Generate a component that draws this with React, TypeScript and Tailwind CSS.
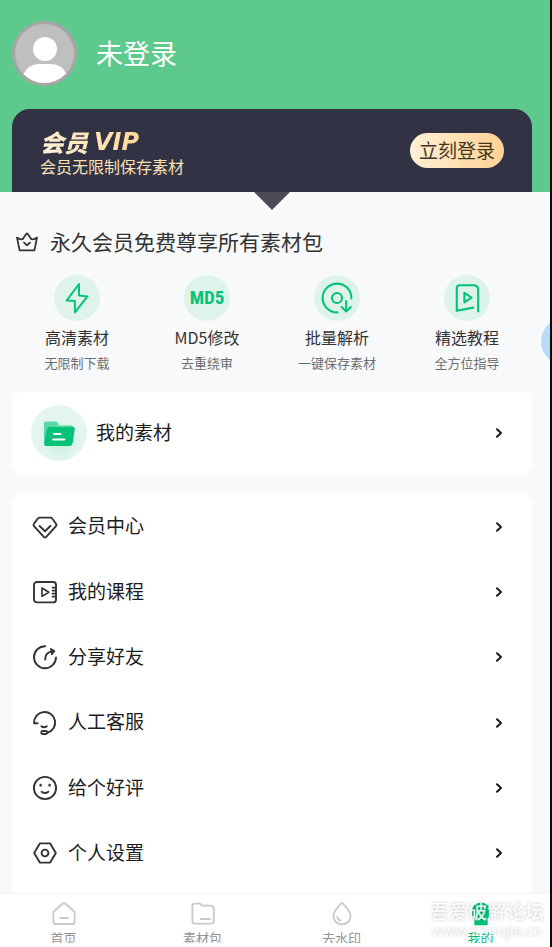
import type { ReactNode } from 'react';

const stroke = {
  fill: 'none',
  stroke: 'currentColor',
  strokeLinecap: 'round' as const,
  strokeLinejoin: 'round' as const,
};

function CrownIcon() {
  return (
    <svg aria-hidden="true" className="h-6 w-6" viewBox="0 0 24 24" {...stroke} strokeWidth="1.8">
      <path d="M4.6 20.4 L2 7.6 Q5 9.8 7.6 9.2 L11.2 4 Q12 3 12.8 4 L16.4 9.2 Q19 9.8 22 7.6 L19.4 20.4 Z" />
      <path d="M9 12.6 L12 15.2 L15 12.6" />
    </svg>
  );
}

function BoltIcon() {
  return (
    <svg aria-hidden="true" className="h-[46px] w-[46px]" viewBox="0 0 46 46" {...stroke} strokeWidth="2">
      <path d="M25 9 L12.6 25.6 L20.8 26 L21 37.4 L33.4 21.4 L25 20.6 Z" />
    </svg>
  );
}

function DiscIcon() {
  return (
    <svg aria-hidden="true" className="h-[46px] w-[46px]" viewBox="0 0 46 46" {...stroke} strokeWidth="2.1">
      <path d="M37.4 23.5 A14.4 14.4 0 1 0 23.6 37.4" />
      <circle cx="23" cy="23" r="5" />
      <path d="M32.2 26 V36.2 M27.6 32 L32.2 36.4 L36.8 32" />
    </svg>
  );
}

function TutorialIcon() {
  return (
    <svg aria-hidden="true" className="h-[46px] w-[46px]" viewBox="0 0 46 46" {...stroke} strokeWidth="2.1">
      <path d="M29.2 32.6 L12.8 35.8 V13.2 Q12.8 10.2 15.8 10.2 H29.4 Q34.2 10.2 34.2 15 V36.4" />
      <path d="M20.4 17.8 V27.4 L27.6 22.6 Z" />
    </svg>
  );
}

function FolderBadge() {
  return (
    <svg aria-hidden="true" className="h-14 w-14 shrink-0" viewBox="0 0 56 56">
      <defs>
        <radialGradient id="badge" cx="50%" cy="62%" r="50%">
          <stop offset="0" stopColor="#bdebd8" />
          <stop offset="0.6" stopColor="#dff4ec" />
          <stop offset="1" stopColor="#e5f6f0" />
        </radialGradient>
      </defs>
      <circle cx="28" cy="28" r="28" fill="url(#badge)" />
      <path d="M13 18 Q13 16.4 14.6 16.4 H25 Q26.6 16.4 27 18 L27.6 20.4 H40.4 Q42.4 20.4 42.4 22.4 V38 H13 Z" fill="#5bd6a5" />
      <path d="M18.6 22 H41.6 Q44.2 22 43.8 24.6 L41.4 38.4 Q41 41 38.4 41 H15.6 Q12.9 41 13.2 38.4 L15.8 24.4 Q16.3 22 18.6 22 Z" fill="#05c279" />
      <path d="M23 29 H29.4 M22 34.6 H33.4" stroke="#fff" strokeWidth="2" strokeLinecap="round" />
    </svg>
  );
}

function MenuIcon({ children }: { children: ReactNode }) {
  return (
    <svg aria-hidden="true" className="h-7 w-7 shrink-0 text-[#333]" viewBox="0 0 28 28" {...stroke} strokeWidth="1.9">
      {children}
    </svg>
  );
}

function Chevron() {
  return (
    <svg aria-hidden="true" className="h-3 w-2 shrink-0" viewBox="0 0 8 12" {...stroke} strokeWidth="2">
      <path d="M2 2.2 L6 6 L2 9.8" />
    </svg>
  );
}

const features = [
  { title: '高清素材', note: '无限制下载', icon: <BoltIcon /> },
  {
    title: 'MD5修改',
    note: '去重绕审',
    icon: <span className="font-['Liberation_Sans_Narrow','Roboto_Condensed',Roboto,sans-serif] text-[19px] font-bold">MD5</span>,
  },
  { title: '批量解析', note: '一键保存素材', icon: <DiscIcon /> },
  { title: '精选教程', note: '全方位指导', icon: <TutorialIcon /> },
];

const menu = [
  {
    label: '会员中心',
    icon: (
      <>
        <path d="M8.6 4.6 H19.6 Q20.4 4.6 21 5.3 L25.2 11 Q25.9 12.1 25 13.1 L15.2 23.9 Q14 25.1 12.8 23.9 L3 13.1 Q2.1 12.1 2.8 11 L7 5.3 Q7.7 4.6 8.6 4.6 Z" />
        <path d="M8.6 13 L14 18.2 L19.4 13" />
      </>
    ),
  },
  {
    label: '我的课程',
    icon: (
      <>
        <rect x="3" y="4" width="22" height="20.4" rx="3" />
        <path d="M11 10 V18.4 L17.8 14.2 Z M21.4 9.6 H24.6 M21.4 12.6 H24.6 M21.4 15.6 H24.6 M21.4 18.6 H24.6" strokeWidth="1.6" />
      </>
    ),
  },
  {
    label: '分享好友',
    icon: (
      <>
        <path d="M14.2 3.2 A11 11 0 1 0 25 14.4" />
        <path d="M14.2 16.6 C14.2 12 16.6 9.2 20.4 8.6" />
        <path d="M19.8 5.4 L24 8 L21 11.8 Z" fill="currentColor" strokeWidth="1" />
      </>
    ),
  },
  {
    label: '人工客服',
    icon: (
      <>
        <path d="M6.6 14.2 H3 A10.6 10.6 0 1 1 16.2 23.9" />
        <path d="M10.4 17.2 Q13 19.2 15.8 17.2" />
        <rect x="10.2" y="22" width="6" height="3" rx="1.5" />
      </>
    ),
  },
  {
    label: '给个好评',
    icon: (
      <>
        <circle cx="14" cy="14" r="11.1" />
        <path d="M10.6 17.8 Q14 20.4 17.4 17.8" />
        <path d="M9.6 11 V11.4 M18.6 11 V11.4" strokeWidth="2.4" />
      </>
    ),
  },
  {
    label: '个人设置',
    icon: (
      <>
        <path d="M8.8 4.4 H19.2 L24.8 14 L19.2 23.6 H8.8 L3.2 14 Z" />
        <circle cx="14" cy="14" r="3.4" />
      </>
    ),
  },
];

const tabs = [
  {
    label: '首页',
    active: false,
    icon: <path d="M3 10.2 L11.2 3 Q13 1.6 14.8 3 L23 10.2 Q23.6 10.8 23.6 11.8 V21 Q23.6 23 21.6 23 H4.4 Q2.4 23 2.4 21 V11.8 Q2.4 10.8 3 10.2 Z M9.2 17 H17" />,
  },
  {
    label: '素材包',
    active: false,
    icon: <path d="M4.6 2.6 H9.4 Q10.4 2.6 11 3.4 Q11.8 4.6 13 4.6 H20.4 Q23.8 4.6 23.8 8 V20 Q23.8 22.6 21.2 22.6 H4.8 Q2.4 22.6 2.4 20.2 V4.8 Q2.4 2.6 4.6 2.6 Z M10.6 18 H20" />,
  },
  {
    label: '去水印',
    active: false,
    icon: <path d="M13 1.6 C9.6 5.2 4.4 10.4 4.4 15.2 A8.6 8.2 0 0 0 21.6 15.2 C21.6 10.4 16.4 5.2 13 1.6 Z M8.2 16 Q8.8 18.6 11.2 19.4" />,
  },
  {
    label: '我的',
    active: true,
    icon: (
      <>
        <path d="M13 1.4 A9.6 9.6 0 0 1 22.6 11 Q22.6 14.4 20.4 17.4 H5.6 Q3.4 14.4 3.4 11 A9.6 9.6 0 0 1 13 1.4 Z" fill="currentColor" stroke="none" />
        <path d="M7 18.4 H19 V23.6 H7 Z" fill="currentColor" strokeWidth="1.4" />
      </>
    ),
  },
];

export default function App() {
  return (
    <div className="relative flex min-h-screen flex-col overflow-hidden border-r-2 border-[#060b16] bg-[#f8f9fb] font-['Noto_Sans_CJK_SC',sans-serif] text-[#333]">
      <header className="relative bg-[#5ec98d] pr-[18px] pl-3 pt-[21px]">
        <div className="flex items-center gap-[19px]">
          <svg role="img" aria-label="头像" className="h-[65px] w-[65px]" viewBox="0 0 65 65">
            <defs>
              <clipPath id="face"><circle cx="32.5" cy="32.5" r="29.5" /></clipPath>
            </defs>
            <circle cx="32.5" cy="32.5" r="32.5" fill="#a6a6a6" />
            <circle cx="32.5" cy="32.5" r="29.5" fill="#bfbfbf" />
            <g clipPath="url(#face)" fill="#fff">
              <circle cx="33" cy="28" r="12" />
              <path d="M11 54 Q16 43 27 43 H39 Q50 43 55 54 V65 H11 Z" />
            </g>
          </svg>
          <h1 className="pb-0.5 text-[27px] leading-9 text-white">未登录</h1>
        </div>
        <section className="mt-[23px] flex h-[83px] items-center justify-between rounded-t-[18px] bg-[#313244] px-7">
          <div className="pt-0.5">
            <h2 className="flex w-max items-center gap-1.5 bg-gradient-to-r from-[#fff1d6] to-[#ffd596] bg-clip-text pr-2 text-2xl leading-7 font-black text-transparent italic">
              <span>会员</span>
              <span className="font-['DejaVu_Sans',sans-serif]">VIP</span>
            </h2>
            <p className="text-base leading-5 text-[#fbe0b4]">会员无限制保存素材</p>
          </div>
          <button type="button" className="h-[35px] rounded-full bg-gradient-to-r from-[#fff0d6] to-[#ffd293] px-[9px] pb-0.5 text-[19px] leading-6 text-[#40361f]">
            立刻登录
          </button>
        </section>
        <svg aria-hidden="true" className="absolute top-full left-[254px] h-[18px] w-9" viewBox="0 0 36 18">
          <path d="M0 0 H36 L18 18 Z" fill="#4b4c55" />
        </svg>
      </header>

      <main className="flex flex-1 flex-col pr-[18px] pl-3 pt-[35px]">
        <h2 className="flex items-center gap-[11px] pl-[3px] text-[21px] leading-[30px]">
          <CrownIcon />
          <span className="pb-0.5 leading-7">永久会员免费尊享所有素材包</span>
        </h2>

        <ul className="mt-[18px] grid grid-cols-4">
          {features.map((f) => (
            <li key={f.title} className="flex flex-col items-center whitespace-nowrap">
              <span className="flex h-[46px] w-[46px] items-center justify-center rounded-full bg-[#def4eb] text-[#05c279]">{f.icon}</span>
              <span className="mt-1 text-base leading-6">{f.title}</span>
              <span className="mt-1 text-[13px] leading-5 text-[#6f6f6f]">{f.note}</span>
            </li>
          ))}
        </ul>

        <button type="button" className="mt-[18px] flex h-[84px] items-center rounded-xl bg-white pr-[29px] pl-[19px] text-left text-[19px] text-[#1c1c1e]">
          <FolderBadge />
          <span className="ml-[9px] flex-1 pb-0.5">我的素材</span>
          <Chevron />
        </button>

        <ul className="mt-[18px] flex flex-1 flex-col rounded-t-xl bg-white pt-px pb-[7px]">
          {menu.map((m) => (
            <li key={m.label} className="flex min-h-16 flex-1">
              <button type="button" className="flex flex-1 items-center pr-[29px] pl-[19px] text-left text-[19px] text-[#1c1c1e]">
                <MenuIcon>{m.icon}</MenuIcon>
                <span className="ml-[9px] flex-1 pb-0.5">{m.label}</span>
                <Chevron />
              </button>
            </li>
          ))}
        </ul>
      </main>

      <div className="relative bg-white pb-1">
        <nav className="-ml-1.5 grid h-[50px] grid-cols-4 overflow-hidden border-t border-[#f5f5f6]">
          {tabs.map((t) => (
            <a
              key={t.label}
              href="#"
              aria-current={t.active ? 'page' : undefined}
              className={t.active ? 'flex flex-col items-center pt-[7px] text-[#05c279]' : 'flex flex-col items-center pt-[7px] text-[#c9c9c9]'}
            >
              <svg aria-hidden="true" className="h-[26px] w-[26px] shrink-0" viewBox="0 0 26 26" {...stroke} strokeWidth="1.8">
                {t.icon}
              </svg>
              <span className={t.active ? 'mt-px text-[13px] leading-5' : 'mt-px text-[13px] leading-5 text-[#929292]'}>{t.label}</span>
            </a>
          ))}
        </nav>
        <div className="pointer-events-none absolute right-1.5 bottom-2 text-center whitespace-nowrap text-white/90 [text-shadow:0_0_3px_rgb(0_0_0/0.25)]">
          <p className="text-[19px] leading-5 font-medium">吾爱破解论坛</p>
          <p className="font-['Open_Sans',sans-serif] text-[15px] leading-[18px] font-medium">www.52pojie.cn</p>
        </div>
      </div>

      <div className="absolute top-[318px] -right-[38px] h-[47px] w-[47px] rounded-full bg-[#b8dcf8]" />
    </div>
  );
}
